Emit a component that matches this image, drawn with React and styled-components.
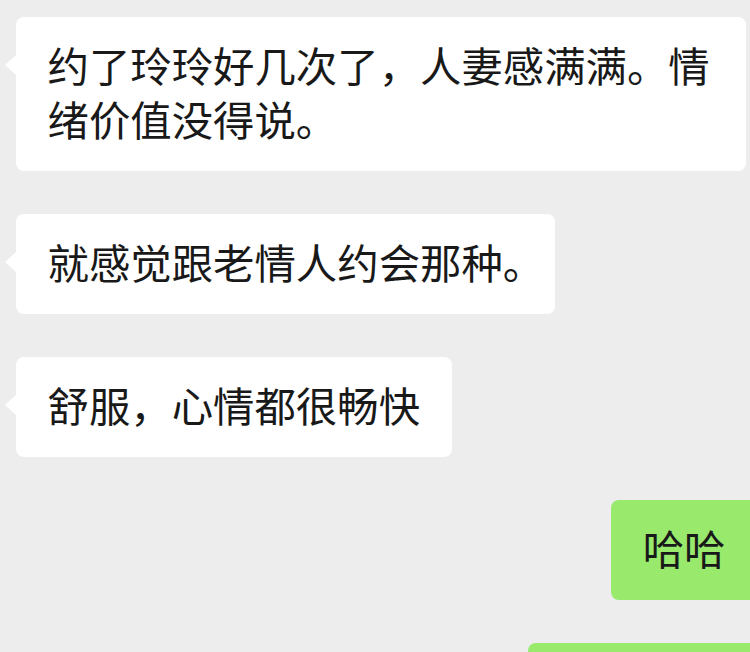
import React from "react";
import styled, { createGlobalStyle } from "styled-components";

const messages = [
  { id: 1, mine: false, text: "约了玲玲好几次了，人妻感满满。情绪价值没得说。" },
  { id: 2, mine: false, text: "就感觉跟老情人约会那种", end: "。" },
  { id: 3, mine: false, text: "舒服，心情都很畅快" },
  { id: 4, mine: true, text: "哈哈" },
  { id: 5, mine: true, text: "哈哈哈哈" },
];

const GlobalStyle = createGlobalStyle`
  html, body {
    margin: 0;
    padding: 0;
    background: #ededed;
    overflow: hidden;
  }
  body {
    font-family: "Noto Sans CJK SC", "Noto Sans", sans-serif;
  }
`;

const Chat = () => {
  return (
    <>
      <GlobalStyle />
      <Wrapper>
        {messages.map((m) => (
          <Bubble key={m.id} $mine={m.mine}>
            {m.text}
            {m.end && <Trail>{m.end}</Trail>}
          </Bubble>
        ))}
      </Wrapper>
    </>
  );
};

const Wrapper = styled.div`
  height: 652px;
  box-sizing: border-box;
  padding: 17px 4px 0 16px;
  display: flex;
  flex-direction: column;
  gap: 43px;
  overflow: hidden;
`;

const Bubble = styled.div`
  position: relative;
  align-self: ${(p) => (p.$mine ? "flex-end" : "flex-start")};
  margin-right: ${(p) => (p.$mine ? "-11px" : "0")};
  max-width: 100%;
  box-sizing: border-box;
  padding: 20px 31.5px 26px;
  border-radius: 8px;
  background: ${(p) => (p.$mine ? "#98e96c" : "#ffffff")};
  color: #191919;
  font-size: 41.4px;
  line-height: 54px;
  word-break: break-all;

  &::before {
    content: "";
    display: ${(p) => (p.$mine ? "none" : "block")};
    position: absolute;
    left: -11px;
    top: 38px;
    width: 0;
    height: 0;
    border-top: 10px solid transparent;
    border-bottom: 10px solid transparent;
    border-right: 11px solid #ffffff;
  }
`;

// trailing full stop is set half-width, as the phone renders it
const Trail = styled.span`
  font-feature-settings: "halt";
`;

export default Chat;
